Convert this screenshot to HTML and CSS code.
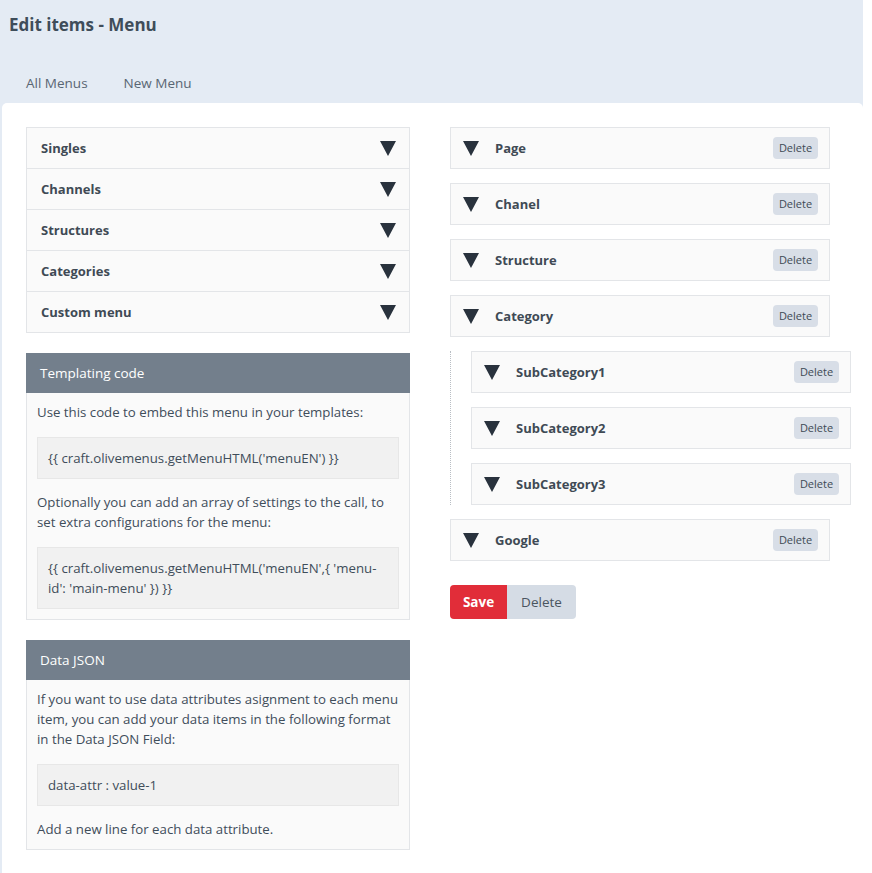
FILE: index.html
```html
<!DOCTYPE html>
<html>
<head>
<meta charset="utf-8">
<link rel="stylesheet" href="styles.css">
</head>
<body>
<div class="page">
  <header class="header">
    <h1 class="title">Edit items - Menu</h1>
    <nav class="tabs">
      <a class="tab">All Menus</a>
      <a class="tab">New Menu</a>
    </nav>
  </header>
  <main class="card">
    <div class="grid">
      <section class="left">
        <div class="accordion">
          <div class="acc-row"><span>Singles</span><svg class="tri" viewBox="0 0 16 16"><polygon points="0,1 16,1 8,16"/></svg></div>
          <div class="acc-row"><span>Channels</span><svg class="tri" viewBox="0 0 16 16"><polygon points="0,1 16,1 8,16"/></svg></div>
          <div class="acc-row"><span>Structures</span><svg class="tri" viewBox="0 0 16 16"><polygon points="0,1 16,1 8,16"/></svg></div>
          <div class="acc-row"><span>Categories</span><svg class="tri" viewBox="0 0 16 16"><polygon points="0,1 16,1 8,16"/></svg></div>
          <div class="acc-row"><span>Custom menu</span><svg class="tri" viewBox="0 0 16 16"><polygon points="0,1 16,1 8,16"/></svg></div>
        </div>

        <div class="panel">
          <div class="panel-head">Templating code</div>
          <div class="panel-body">
            <p class="txt">Use this code to embed this menu in your templates:</p>
            <div class="code">{{ craft.olivemenus.getMenuHTML('menuEN') }}</div>
            <p class="txt">Optionally you can add an array of settings to the call, to set extra configurations for the menu:</p>
            <div class="code code--last">{{ craft.olivemenus.getMenuHTML('menuEN',{ 'menu-id': 'main-menu' }) }}</div>
          </div>
        </div>

        <div class="panel">
          <div class="panel-head">Data JSON</div>
          <div class="panel-body">
            <p class="txt">If you want to use data attributes asignment to each menu item, you can add your data items in the following format in the Data JSON Field:</p>
            <div class="code">data-attr : value-1</div>
            <p class="txt txt--last">Add a new line for each data attribute.</p>
          </div>
        </div>
      </section>

      <section class="right">
        <div class="item"><svg class="tri" viewBox="0 0 16 16"><polygon points="0,1 16,1 8,16"/></svg><span class="item-label">Page</span><button class="btn-small">Delete</button></div>
        <div class="item"><svg class="tri" viewBox="0 0 16 16"><polygon points="0,1 16,1 8,16"/></svg><span class="item-label">Chanel</span><button class="btn-small">Delete</button></div>
        <div class="item"><svg class="tri" viewBox="0 0 16 16"><polygon points="0,1 16,1 8,16"/></svg><span class="item-label">Structure</span><button class="btn-small">Delete</button></div>
        <div class="item"><svg class="tri" viewBox="0 0 16 16"><polygon points="0,1 16,1 8,16"/></svg><span class="item-label">Category</span><button class="btn-small">Delete</button></div>
        <div class="children">
          <div class="item"><svg class="tri" viewBox="0 0 16 16"><polygon points="0,1 16,1 8,16"/></svg><span class="item-label">SubCategory1</span><button class="btn-small">Delete</button></div>
          <div class="item"><svg class="tri" viewBox="0 0 16 16"><polygon points="0,1 16,1 8,16"/></svg><span class="item-label">SubCategory2</span><button class="btn-small">Delete</button></div>
          <div class="item"><svg class="tri" viewBox="0 0 16 16"><polygon points="0,1 16,1 8,16"/></svg><span class="item-label">SubCategory3</span><button class="btn-small">Delete</button></div>
        </div>
        <div class="item"><svg class="tri" viewBox="0 0 16 16"><polygon points="0,1 16,1 8,16"/></svg><span class="item-label">Google</span><button class="btn-small">Delete</button></div>
        <div class="actions">
          <button class="btn btn-save">Save</button>
          <button class="btn btn-delete">Delete</button>
        </div>
      </section>
    </div>
  </main>
</div>
</body>
</html>
```

FILE: styles.css
```css
* { box-sizing: border-box; }

html, body {
  margin: 0;
  padding: 0;
  background: #ffffff;
  height: 100%;
}

body {
  font-family: "Open Sans", "Noto Sans", "Liberation Sans", sans-serif;
  color: #3f4d5a;
  font-size: 13px;
}

.page {
  width: 863px;
  min-height: 100%;
  background: #e4ebf4;
  display: flex;
  flex-direction: column;
}

.header {
  padding: 13px 0 0 0;
}

.title {
  margin: 0;
  padding-left: 9px;
  font-size: 17px;
  line-height: 24px;
  font-weight: 700;
  color: #3f4d5a;
}

.tabs {
  display: flex;
  gap: 36px;
  padding: 36px 0 10px 26px;
}

.tab {
  font-size: 13.5px;
  line-height: 20px;
  color: #596673;
}

.card {
  flex: 1;
  margin-left: 2px;
  background: #ffffff;
  border-radius: 5px 5px 0 0;
  padding: 24px 0 0 24px;
}

.grid {
  display: grid;
  grid-template-columns: 384px 401px;
  column-gap: 40px;
}

/* Accordion */
.accordion {
  border: 1px solid #e3e5e8;
  background: #fafafa;
}

.acc-row {
  height: 41px;
  display: flex;
  align-items: center;
  justify-content: space-between;
  padding: 0 13px 0 14px;
  border-top: 1px solid #e3e5e8;
  font-weight: 700;
  font-size: 13px;
  color: #3f4a55;
}

.acc-row:first-child {
  border-top: none;
  height: 40px;
}

.tri {
  width: 16px;
  height: 16px;
  fill: #29323d;
  flex: none;
}

/* Panels */
.panel {
  margin-top: 20px;
  border: 1px solid #e3e5e8;
  border-top: none;
  background: #fafafa;
}

.panel-head {
  height: 40px;
  display: flex;
  align-items: center;
  padding-left: 14px;
  background: #737f8c;
  color: #ffffff;
  font-size: 13.5px;
  margin: 0 -1px;
}

.panel-body {
  padding: 9px 10px 10px 10px;
}

.txt {
  margin: 0 0 15px 0;
  font-size: 13.25px;
  line-height: 20px;
  color: #3f4d5a;
}

.txt--last {
  margin-bottom: 0;
}

.code {
  background: #f1f1f1;
  border: 1px solid #e7e7e7;
  padding: 10px 10px;
  font-size: 13.25px;
  line-height: 20px;
  color: #3f4d5a;
  margin-bottom: 13px;
}

.code--last {
  margin-bottom: 0;
}

/* Right column items */
.right {
  display: flex;
  flex-direction: column;
  gap: 14px;
}

.item {
  width: 380px;
  height: 42px;
  display: flex;
  align-items: center;
  padding: 0 11px 0 12px;
  border: 1px solid #e3e5e8;
  background: #fafafa;
}

.item .tri {
  margin-right: 16px;
}

.item-label {
  flex: 1;
  font-weight: 700;
  font-size: 13px;
  color: #3f4a55;
}

.btn-small {
  font-family: inherit;
  font-size: 11px;
  line-height: 22px;
  height: 22px;
  width: 45px;
  padding: 0;
  border: none;
  border-radius: 4px;
  background: #d8dee7;
  color: #3f4a55;
}

.children {
  display: flex;
  flex-direction: column;
  gap: 14px;
  padding-left: 20px;
  border-left: 1px dotted #b9bec4;
}

.actions {
  display: flex;
  margin-top: 10px;
}

.btn {
  font-family: inherit;
  font-size: 13.5px;
  height: 34px;
  border: none;
  padding: 0;
}

.btn-save {
  width: 57px;
  background: #e12d39;
  color: #ffffff;
  font-weight: 700;
  border-radius: 4px 0 0 4px;
}

.btn-delete {
  width: 69px;
  background: #d5dce5;
  color: #4a5560;
  border-radius: 0 4px 4px 0;
}
```
